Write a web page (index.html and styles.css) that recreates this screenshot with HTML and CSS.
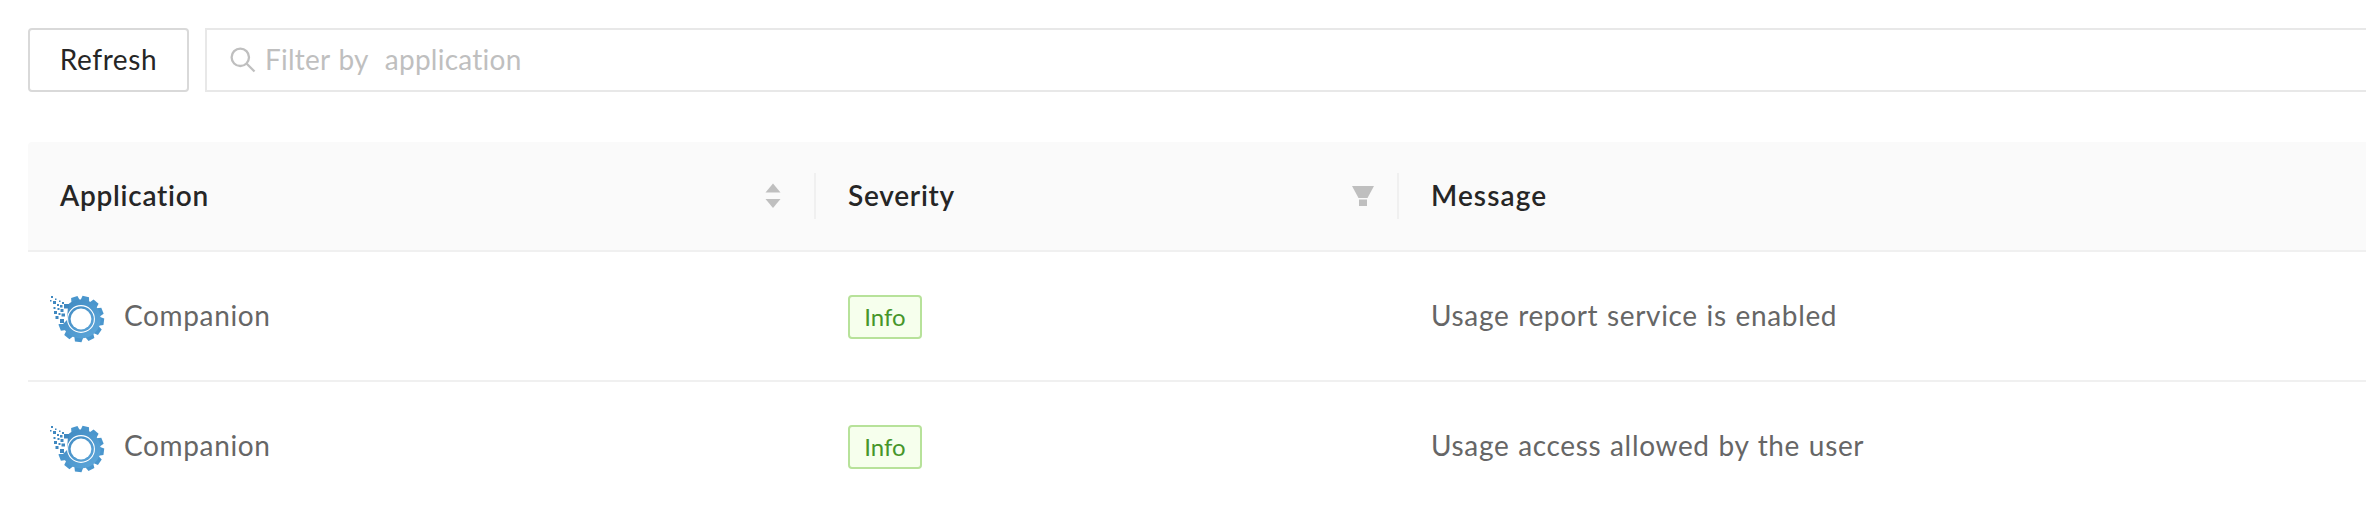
FILE: index.html
```html
<!DOCTYPE html>
<html lang="en">
<head>
    <meta charset="UTF-8">
    <meta name="viewport" content="width=device-width, initial-scale=1.0">
    <title>Applications</title>
    <link rel="stylesheet" href="styles.css">
</head>
<body>
    <svg class="sprite" width="0" height="0">
        <defs>
            <linearGradient id="gearFill" x1="0" y1="0" x2="1" y2="1">
                <stop offset="0" stop-color="#3f88c0"/>
                <stop offset="1" stop-color="#5fa9dc"/>
            </linearGradient>
            <path id="tooth" d="M-4.500 -18 L-3.300 -23 H3.300 L4.500 -18 Z"/>
            <symbol id="gear" viewBox="0 0 60 54">
                <g fill="#4a96cd" transform="translate(33 27)">
                    <use href="#tooth" transform="rotate(-17)"/>
                    <use href="#tooth" transform="rotate(12)"/>
                    <use href="#tooth" transform="rotate(41)"/>
                    <use href="#tooth" transform="rotate(69)"/>
                    <use href="#tooth" transform="rotate(97)"/>
                    <use href="#tooth" transform="rotate(125)"/>
                    <use href="#tooth" transform="rotate(153)"/>
                    <use href="#tooth" transform="rotate(187)"/>
                    <use href="#tooth" transform="rotate(218)"/>
                    <use href="#tooth" transform="rotate(248)"/>
                </g>
                <circle cx="33" cy="27" r="19.6" fill="url(#gearFill)"/>
                <path d="M10 4 H21 L20 14 L19 28 L15 32 H10 Z" fill="#fff"/>
                <circle cx="33" cy="27" r="13.4" fill="none" stroke="#fff" stroke-width="1.1"/>
                <circle cx="33" cy="27" r="10.4" fill="#fff"/>
                <path fill="#3f88c0" d="M3 4h2v2h-2zM2 8h1.500v1.500h-1.500zM7 6.500h1.500v1.500h-1.500zM5 9h3v3h-3zM11 8.500h1.500v1.500h-1.500zM9 12h2v2h-2zM14 10h2v2h-2zM12 13h2.500v2.500h-2.500zM16 12h5v4.500h-5zM5.500 15h2v2h-2zM9.500 16h2v2h-2zM12.500 17h3v3h-3zM6 19h3v3h-3zM10.500 21h2v2h-2zM13.500 21.500h3.500v3h-3.500zM7.500 24h3v3h-3zM12 27h4v4h-4z"/>
            </symbol>
        </defs>
    </svg>

    <div class="page">
        <div class="toolbar">
            <button class="btn" type="button">Refresh</button>
            <div class="filter">
                <svg class="filter-icon" viewBox="0 0 26 26" fill="none" stroke="#bfbfbf" stroke-width="2.300">
                    <circle cx="10.300" cy="10.300" r="8.700"/>
                    <path d="M16.500 16.500 L24.500 24.500"/>
                </svg>
                <span class="filter-placeholder">Filter by&nbsp; application</span>
            </div>
        </div>

        <div class="table">
            <div class="row head">
                <div class="cell th">
                    <span class="text">Application</span>
                    <svg class="sorter" viewBox="0 0 16 26" fill="#bfbfbf">
                        <path d="M8 0.500 L15.500 9.500 H0.500 Z"/>
                        <path d="M0.500 16 H15.500 L8 25 Z"/>
                    </svg>
                </div>
                <div class="cell th">
                    <span class="text">Severity</span>
                    <svg class="funnel" viewBox="0 0 22 20" fill="#bfbfbf">
                        <path d="M0 0 H22 L15.500 12 H6.500 Z"/>
                        <path d="M7 13.500 H15 V20 H7 Z"/>
                    </svg>
                </div>
                <div class="cell th">
                    <span class="text message">Message</span>
                </div>
            </div>
            <div class="row">
                <div class="cell app">
                    <svg class="app-icon"><use href="#gear"/></svg>
                    <span class="text">Companion</span>
                </div>
                <div class="cell"><span class="tag">Info</span></div>
                <div class="cell"><span class="text">Usage report service is enabled</span></div>
            </div>
            <div class="row">
                <div class="cell app">
                    <svg class="app-icon"><use href="#gear"/></svg>
                    <span class="text">Companion</span>
                </div>
                <div class="cell"><span class="tag">Info</span></div>
                <div class="cell"><span class="text">Usage access allowed by the user</span></div>
            </div>
        </div>
    </div>
</body>
</html>
```
FILE: styles.css
```css
* {
    margin: 0;
    padding: 0;
    box-sizing: border-box;
}

body {
    background-color: #fff;
    color: #666;
    font-family: Lato, "Open Sans", sans-serif;
    font-size: 28px;
    line-height: 44px;
    letter-spacing: 0.65px;
    overflow: hidden;
}

.sprite {
    position: absolute;
}

.page {
    padding: 28px 0 0 28px;
}

.toolbar {
    display: flex;
    gap: 16px;
    margin-bottom: 50px;
}

.btn {
    width: 161px;
    height: 64px;
    padding-bottom: 2px;
    border: 2px solid #d9d9d9;
    border-radius: 4px;
    background: #fff;
    color: #262626;
    font: inherit;
    letter-spacing: 0.6px;
    white-space: nowrap;
}

.filter {
    flex: 1;
    display: flex;
    align-items: center;
    height: 64px;
    padding-left: 23px;
    border: 2px solid #e8e8e8;
    border-right: none;
    color: #bfbfbf;
}

.filter-icon {
    width: 26px;
    height: 26px;
    margin-right: 9px;
}

.filter-placeholder {
    padding-bottom: 2px;
    letter-spacing: 0.25px;
    word-spacing: 1px;
}

.row {
    display: grid;
    grid-template-columns: 788px 583px 1fr;
    height: 130px;
    border-bottom: 2px solid #f0f0f0;
}

.row:last-child {
    border-bottom: none;
    padding-bottom: 2px;
}

.head {
    height: 110px;
    background-color: #fafafa;
    border-radius: 4px 0 0 0;
    color: #262626;
    font-weight: 600;
}

.cell {
    display: flex;
    align-items: center;
    padding-left: 32px;
    white-space: nowrap;
}

.text {
    padding-bottom: 2px;
    word-spacing: 1px;
}

.head .text {
    letter-spacing: 0.75px;
}

.head .message {
    letter-spacing: 1.1px;
}

.th {
    justify-content: space-between;
    height: 46px;
    align-self: center;
}

.th:not(:last-child) {
    border-right: 2px solid #f0f0f0;
}

.sorter {
    width: 16px;
    height: 26px;
    margin-right: 33px;
}

.funnel {
    width: 22px;
    height: 20px;
    margin-right: 23px;
}

.app {
    padding-left: 20px;
}

.app-icon {
    width: 60px;
    height: 54px;
    margin-top: 6px;
    margin-right: 16px;
}

.tag {
    width: 74px;
    height: 44px;
    margin-top: 2px;
    border: 2px solid #b7e29a;
    border-radius: 4px;
    background-color: #f6ffed;
    color: #46962b;
    font-size: 24px;
    letter-spacing: 0;
    line-height: 39px;
    text-align: center;
}
```
